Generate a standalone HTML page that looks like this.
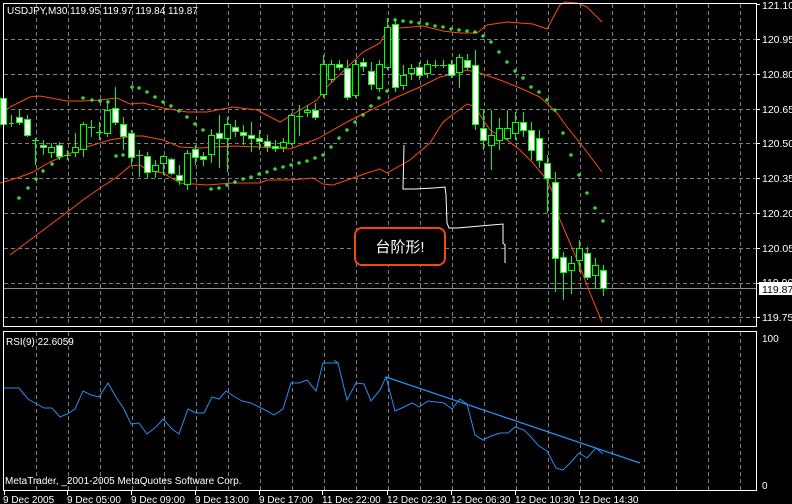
<!DOCTYPE html>
<html><head><meta charset="utf-8"><style>
html,body{margin:0;padding:0;background:#000;width:792px;height:504px;overflow:hidden}
svg{display:block}
text{font-family:"Liberation Sans","Noto Sans CJK SC",sans-serif;fill:#fff}
</style></head><body>
<svg width="792" height="504" viewBox="0 0 792 504" xmlns="http://www.w3.org/2000/svg">
<defs>
<marker id="p" markerUnits="userSpaceOnUse" markerWidth="5" markerHeight="5" refX="2.5" refY="2.5" viewBox="0 0 5 5">
<path d="M0.5 2.5h4M2.5 0.5v4" stroke="#33ff33" stroke-width="1.2"/>
</marker>
</defs>
<rect width="792" height="504" fill="#000"/>
<g stroke="#7f7f7f" stroke-width="1" stroke-dasharray="4,3">
<path d="M36.5 4V327M68.5 4V327M100.5 4V327M132.5 4V327M164.5 4V327M196.5 4V327M228.5 4V327M260.5 4V327M292.5 4V327M324.5 4V327M356.5 4V327M388.5 4V327M420.5 4V327M452.5 4V327M484.5 4V327M516.5 4V327M548.5 4V327M580.5 4V327M612.5 4V327M644.5 4V327M676.5 4V327M708.5 4V327M740.5 4V327"/>
<path d="M4 39.5H757M4 74.5H757M4 109.5H757M4 143.5H757M4 178.5H757M4 213.5H757M4 248.5H757M4 283.5H757M4 317.5H757"/>
<path d="M36.5 332V491M68.5 332V491M100.5 332V491M132.5 332V491M164.5 332V491M196.5 332V491M228.5 332V491M260.5 332V491M292.5 332V491M324.5 332V491M356.5 332V491M388.5 332V491M420.5 332V491M452.5 332V491M484.5 332V491M516.5 332V491M548.5 332V491M580.5 332V491M612.5 332V491M644.5 332V491M676.5 332V491M708.5 332V491M740.5 332V491"/>
</g>
<line x1="4" y1="288.5" x2="757" y2="288.5" stroke="#8a8f99"/>
<g fill="none" stroke="#ff4a10" stroke-width="1">
<polyline points="0,115 10,107 30,97 40,96 67,101 83,101 100,100 117,98 130,104 143,103 163,108 187,112 207,112 233,107 257,110 280,122 300,110 317,100 327,87 363,52 380,43 387,30 400,28 423,26 443,31 460,33 477,33 487,25 507,22 533,24 547,29 560,5 565,2 577,3 587,7 602,22"/>
<polyline points="0,183 20,177 33,172 50,162 83,148 110,140 133,136 143,136 163,140 180,147 200,148 233,146 260,147 290,149 317,139 333,130 347,122 367,112 387,102 397,97 420,87 440,77 453,74 467,70 480,73 500,80 520,88 540,97 557,113 567,127 580,143 593,160 602,172"/>
<polyline points="10,255 30,240 50,225 70,210 83,200 100,188 117,177 130,166 140,165 147,170 163,173 180,183 207,185 233,183 260,183 267,180 290,180 313,178 323,184 333,185 353,178 367,173 380,169 387,173 410,160 430,143 443,122 467,104 477,107 480,115 490,130 507,140 520,150 533,163 547,180 553,193 560,220 570,243 580,267 590,293 602,322"/>
</g>
<polyline fill="none" stroke="none" marker-start="url(#p)" marker-mid="url(#p)" marker-end="url(#p)" points="19,198 28,188 36,179 43,171 52,164 59,157 83,98 92,100 100,101 108,102 116,156 123,155 132,87 139,88 147,92 155,97 163,102 171,106 179,111 187,117 195,124 203,130 211,189 219,188 227,185 235,182 243,179 251,177 259,174 267,172 275,169 283,167 291,165 299,163 307,161 315,158 323,155 331,147 339,138 347,130 355,122 363,115 371,106 379,98 387,91 395,20 403,21 411,22 419,23 427,24 435,26 443,27 451,29 459,30 467,31 475,32 483,36 491,42 499,52 507,62 515,71 523,78 531,87 539,92 547,100 555,110 563,133 571,155 579,175 587,193 595,208 603,221"/>
<g stroke="#00ff00" stroke-width="1">
<path d="M3.5 96V126M11.5 115V127M19.5 110V125M27.5 115V137M35.5 138V165M43.5 140V155M51.5 143V158M59.5 142V160M67.5 150V160M75.5 133V157M83.5 122V157M91.5 120V137M99.5 122V140M107.5 100V137M115.5 87V125M123.5 117V150M131.5 130V165M139.5 150V177M147.5 152V178M155.5 160V178M163.5 155V175M171.5 158V175M179.5 165V185M187.5 150V190M195.5 145V165M203.5 152V166M211.5 129V163M219.5 115V168M227.5 117V172M235.5 120V137M243.5 125V145M251.5 122V152M259.5 130V150M267.5 135V152M275.5 140V152M283.5 138V152M291.5 113V145M299.5 105V136M307.5 105V117M315.5 103V120M323.5 55V98M331.5 60V82M339.5 60V70M347.5 60V100M355.5 60V98M363.5 58V72M371.5 62V90M379.5 60V92M387.5 18V70M395.5 18V92M403.5 65V90M411.5 64V80M419.5 62V80M427.5 60V78M435.5 60V68M443.5 60V68M451.5 60V78M459.5 54V88M467.5 54V70M475.5 50V130M483.5 110V150M491.5 110V170M499.5 118V150M507.5 110V140M515.5 112V140M523.5 112V137M531.5 122V160M539.5 130V168M547.5 155V213M555.5 172V292M563.5 252V300M571.5 256V294M579.5 240V272M587.5 247V280M595.5 258V289M603.5 265V296"/>
<g fill="#fff">
<rect x="0.5" y="98.5" width="6" height="26"/><rect x="16.5" y="117.5" width="6" height="5"/><rect x="24.5" y="119.5" width="6" height="16"/><rect x="40.5" y="145.5" width="6" height="2"/><rect x="56.5" y="145.5" width="6" height="11"/><rect x="112.5" y="108.5" width="6" height="14"/><rect x="120.5" y="124.5" width="6" height="12"/><rect x="128.5" y="133.5" width="6" height="24"/><rect x="144.5" y="156.5" width="6" height="16"/><rect x="168.5" y="159.5" width="6" height="14"/><rect x="176.5" y="175.5" width="6" height="5"/><rect x="192.5" y="149.5" width="6" height="8"/><rect x="200.5" y="156.5" width="6" height="3"/><rect x="216.5" y="133.5" width="6" height="5"/><rect x="232.5" y="127.5" width="6" height="4"/><rect x="240.5" y="132.5" width="6" height="3"/><rect x="248.5" y="135.5" width="6" height="3"/><rect x="256.5" y="138.5" width="6" height="3"/><rect x="264.5" y="141.5" width="6" height="5"/><rect x="272.5" y="146.5" width="6" height="2"/><rect x="312.5" y="110.5" width="6" height="7"/><rect x="336.5" y="64.5" width="6" height="3"/><rect x="344.5" y="68.5" width="6" height="29"/><rect x="360.5" y="62.5" width="6" height="4"/><rect x="368.5" y="71.5" width="6" height="13"/><rect x="392.5" y="24.5" width="6" height="63"/><rect x="416.5" y="67.5" width="6" height="8"/><rect x="448.5" y="64.5" width="6" height="11"/><rect x="464.5" y="60.5" width="6" height="7"/><rect x="472.5" y="65.5" width="6" height="59"/><rect x="480.5" y="128.5" width="6" height="12"/><rect x="520.5" y="122.5" width="6" height="8"/><rect x="528.5" y="130.5" width="6" height="20"/><rect x="536.5" y="138.5" width="6" height="22"/><rect x="544.5" y="163.5" width="6" height="15"/><rect x="552.5" y="182.5" width="6" height="76"/><rect x="560.5" y="257.5" width="6" height="15"/><rect x="584.5" y="253.5" width="6" height="24"/><rect x="600.5" y="270.5" width="6" height="18"/>
</g>
<g fill="#000">
<rect x="48.5" y="147.5" width="6" height="5"/><rect x="72.5" y="147.5" width="6" height="5"/><rect x="80.5" y="124.5" width="6" height="25"/><rect x="104.5" y="110.5" width="6" height="23"/><rect x="152.5" y="165.5" width="6" height="6"/><rect x="160.5" y="156.5" width="6" height="7"/><rect x="184.5" y="153.5" width="6" height="31"/><rect x="208.5" y="135.5" width="6" height="19"/><rect x="224.5" y="124.5" width="6" height="14"/><rect x="280.5" y="142.5" width="6" height="5"/><rect x="288.5" y="115.5" width="6" height="28"/><rect x="304.5" y="110.5" width="6" height="2"/><rect x="320.5" y="64.5" width="6" height="30"/><rect x="328.5" y="64.5" width="6" height="15"/><rect x="352.5" y="64.5" width="6" height="31"/><rect x="376.5" y="64.5" width="6" height="24"/><rect x="384.5" y="27.5" width="6" height="40"/><rect x="400.5" y="75.5" width="6" height="10"/><rect x="408.5" y="68.5" width="6" height="5"/><rect x="424.5" y="64.5" width="6" height="9"/><rect x="456.5" y="57.5" width="6" height="15"/><rect x="488.5" y="135.5" width="6" height="10"/><rect x="496.5" y="128.5" width="6" height="12"/><rect x="504.5" y="128.5" width="6" height="10"/><rect x="512.5" y="122.5" width="6" height="11"/><rect x="568.5" y="263.5" width="6" height="7"/><rect x="576.5" y="248.5" width="6" height="12"/><rect x="592.5" y="265.5" width="6" height="10"/>
</g>
<path d="M9 123.5h5M32 140.5h7M64 155.5h7M88 127.5h7M96 132.5h7M136 155.5h7M296 116.5h7M432 65.5h7M440 65.5h7"/>
</g>
<polyline fill="none" stroke="#fff" stroke-width="1" points="404,145 403,189 414,189 434,188 445,187 446,195 447,223 449,228 457,228 480,226 503,224 503,243 505,245 505,263"/>
<rect x="355" y="228" width="90" height="37" rx="7" ry="7" fill="#000" stroke="#f04a10" stroke-width="2"/>
<text x="400" y="252" font-size="15" text-anchor="middle">台阶形!</text>
<polyline fill="none" stroke="#2a8cf0" stroke-width="1" points="4,388 19,388 28,399 35,403 44,408 52,408 60,417 67,414 75,409 83,391 91,395 99,397 108,383 116,397 124,409 131,424 139,423 147,434 156,427 163,419 172,429 179,434 188,409 196,413 204,413 212,397 219,399 226,391 235,397 242,401 251,403 259,407 267,411 274,415 283,409 291,383 299,383 307,380 316,391 323,363 331,363 338,363 334,360 338,363 347,400 356,383 364,384 371,401 380,390 386,377 395,411 404,407 412,403 419,407 428,401 436,402 444,403 452,409 460,399 467,404 475,435 483,440 491,436 500,433 508,433 515,427 524,430 531,437 539,446 547,451 556,468 563,470 571,462 579,453 587,458 596,448 603,454"/>
<line x1="386" y1="377" x2="640" y2="463" stroke="#2a8cf0" stroke-width="1.3"/>
<rect x="3.5" y="3.5" width="753" height="323" fill="none" stroke="#fff"/>
<rect x="3.5" y="331.5" width="753" height="159" fill="none" stroke="#fff"/>
<g stroke="#fff"><path d="M757 4.5h3M757 39.5h3M757 74.5h3M757 109.5h3M757 143.5h3M757 178.5h3M757 213.5h3M757 248.5h3M757 283.5h3M757 317.5h3M4.5 491v4M67.5 491v4M131.5 491v4M195.5 491v4M259.5 491v4M322.5 491v4M387.5 491v4M451.5 491v4M515.5 491v4M579.5 491v4"/></g>
<g font-size="10.5">
<text x="762" y="9">121.10</text><text x="762" y="43">120.95</text><text x="762" y="78">120.80</text><text x="762" y="113">120.65</text><text x="762" y="147">120.50</text><text x="762" y="182">120.35</text><text x="762" y="217">120.20</text><text x="762" y="252">120.05</text><text x="762" y="286">119.90</text><text x="762" y="321">119.75</text>
</g>
<rect x="759" y="282" width="33" height="13" fill="#fff"/>
<text x="762" y="293" font-size="10.5" style="fill:#000">119.87</text>
<text x="762" y="342" font-size="10">100</text>
<text x="762" y="489" font-size="10">0</text>
<text x="7" y="14" font-size="10">USDJPY,M30  119.95 119.97 119.84 119.87</text>
<text x="6" y="345" font-size="10">RSI(9) 22.6059</text>
<text x="5" y="484" font-size="10">MetaTrader, _2001-2005 MetaQuotes Software Corp.</text>
<g font-size="10">
<text x="3" y="503">9 Dec 2005</text><text x="67" y="503">9 Dec 05:00</text><text x="131" y="503">9 Dec 09:00</text><text x="195" y="503">9 Dec 13:00</text><text x="259" y="503">9 Dec 17:00</text><text x="322" y="503">11 Dec 22:00</text><text x="387" y="503">12 Dec 02:30</text><text x="451" y="503">12 Dec 06:30</text><text x="515" y="503">12 Dec 10:30</text><text x="579" y="503">12 Dec 14:30</text>
</g>
</svg>
</body></html>
